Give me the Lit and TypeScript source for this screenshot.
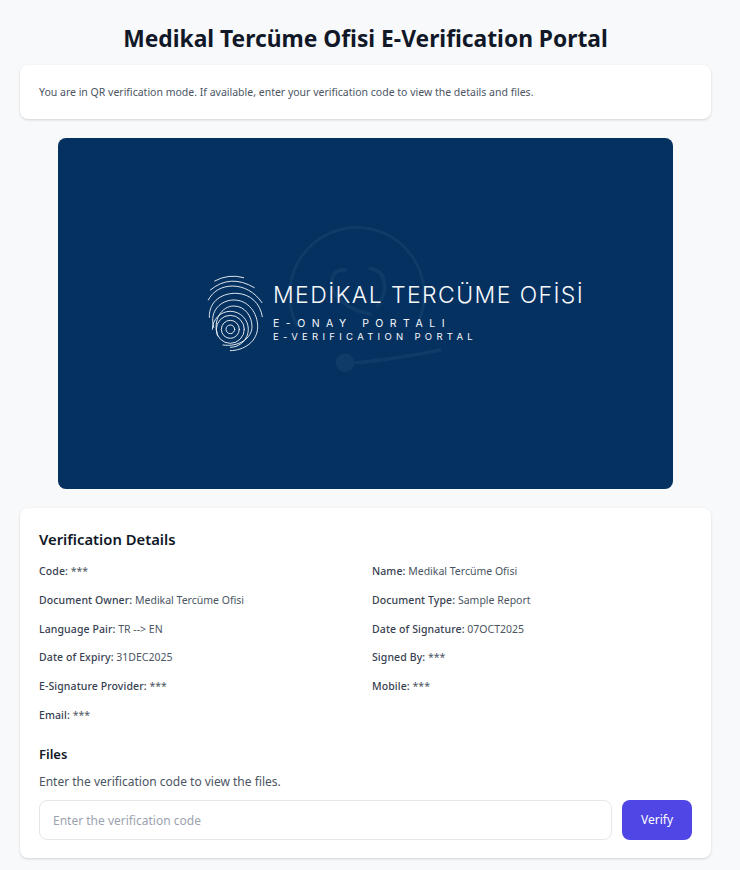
import { css, html, LitElement } from "lit";
import { customElement } from "lit/decorators.js";

const DETAILS: [string, string][] = [
  ["Code:", "***"],
  ["Name:", "Medikal Tercüme Ofisi"],
  ["Document Owner:", "Medikal Tercüme Ofisi"],
  ["Document Type:", "Sample Report"],
  ["Language Pair:", "TR --> EN"],
  ["Date of Signature:", "07OCT2025"],
  ["Date of Expiry:", "31DEC2025"],
  ["Signed By:", "***"],
  ["E-Signature Provider:", "***"],
  ["Mobile:", "***"],
  ["Email:", "***"],
];

@customElement("app-root")
export class AppRoot extends LitElement {
  static styles = css`
    :host {
      display: block;
      min-height: 870px;
      box-sizing: border-box;
      background: #f8f9fb;
      padding: 21px 29px 11px 20px;
      font-family: "Noto Sans", "Open Sans", sans-serif;
      color: #374151;
    }

    h1 {
      margin: 0 0 8px;
      font-size: 22.8px;
      line-height: 36px;
      font-weight: 700;
      text-align: center;
      color: #111827;
    }

    .card {
      background: #fff;
      border-radius: 8px;
      box-shadow: 0 1px 3px rgba(0, 0, 0, 0.12), 0 1px 2px rgba(0, 0, 0, 0.04);
    }

    .notice {
      height: 54px;
      box-sizing: border-box;
      padding: 0 19px;
      display: flex;
      align-items: center;
      font-size: 10.5px;
      color: #4b5563;
    }

    .banner {
      position: relative;
      width: 615px;
      height: 351px;
      margin: 19px auto;
      border-radius: 8px;
      background: #053161;
      overflow: hidden;
    }

    .watermark {
      position: absolute;
      left: 202px;
      top: 72px;
      width: 200px;
      height: 200px;
      fill: none;
      stroke: #0f3b69;
      stroke-linecap: round;
    }

    .finger {
      position: absolute;
      left: 148.67px;
      top: 137px;
      width: 56.67px;
      height: 77.33px;
      fill: none;
      stroke: #eef2f6;
      stroke-width: 2.8;
      stroke-linecap: round;
    }

    .logo-text {
      position: absolute;
      left: 215px;
      top: 142px;
      color: #f6f8fa;
      font-family: "Inter", sans-serif;
      white-space: nowrap;
    }

    .logo-name {
      font-size: 23px;
      line-height: 30px;
      font-weight: 300;
      letter-spacing: 1.4px;
    }

    .logo-sub {
      margin-top: 7px;
      font-size: 10.5px;
      line-height: 13px;
      font-weight: 400;
      letter-spacing: 6.5px;
    }

    .logo-sub.second {
      margin-top: 1px;
      font-size: 9.5px;
      line-height: 11px;
      letter-spacing: 4.3px;
    }

    .details {
      height: 350px;
      box-sizing: border-box;
      padding: 19px 19px;
    }

    h2 {
      margin: 0 0 12px;
      font-size: 14.8px;
      line-height: 24px;
      font-weight: 600;
      color: #111827;
    }

    .grid {
      display: grid;
      grid-template-columns: 333px 1fr;
      grid-auto-rows: 28.8px;
      font-size: 10.5px;
      line-height: 16px;
      color: #4b5563;
    }

    .grid b {
      font-weight: 500;
      color: #374151;
      letter-spacing: 0.1px;
    }

    h3 {
      margin: 8px 0 8px;
      font-size: 13px;
      line-height: 20px;
      font-weight: 600;
      color: #111827;
    }

    .hint {
      margin: 0 0 8px;
      font-size: 12px;
      line-height: 20px;
      color: #4b5563;
    }

    .verify {
      display: flex;
      gap: 10px;
    }

    input {
      flex: 1;
      min-width: 0;
      height: 40px;
      box-sizing: border-box;
      padding: 2px 13px 0;
      border: 1px solid #e5e7eb;
      border-radius: 8px;
      outline: none;
      background: #fff;
      font: 12px "Noto Sans", sans-serif;
    }

    input::placeholder {
      color: #9ca3af;
    }

    button {
      width: 70px;
      height: 40px;
      border: none;
      border-radius: 8px;
      background: #4f46e5;
      color: #fff;
      font: 12px "Noto Sans", sans-serif;
    }
  `;

  render() {
    return html`
      <h1>Medikal Tercüme Ofisi E-Verification Portal</h1>
      <div class="card notice">
        You are in QR verification mode. If available, enter your verification
        code to view the details and files.
      </div>
      <div class="banner">
        <svg class="watermark" viewBox="0 0 600 600">
          <path d="M110 345 A202 202 0 1 1 478 330" stroke-width="9"></path>
          <path
            d="M255 180 C215 175 205 220 225 250 C245 285 290 305 330 312"
            stroke-width="11"
          ></path>
          <path d="M330 175 C378 180 388 240 352 288" stroke-width="11"></path>
          <path d="M255 458 H300 C370 450 440 440 540 420" stroke-width="11"></path>
          <circle cx="255" cy="458" r="28" fill="#0f3b69" stroke="none"></circle>
        </svg>
        <svg class="finger" viewBox="80 195 170 232">
          <path d="M103 213 Q145 190 190 203"></path>
          <path d="M90 240 Q150 190 222 233"></path>
          <path d="M84 270 C110 215 200 210 245 278"></path>
          <path d="M87 322 C85 270 130 248 170 250 C210 252 240 280 246 320"></path>
          <path d="M100 352 C85 300 125 270 160 270 C205 270 232 310 232 350 C232 395 190 422 150 422"></path>
          <path d="M112 378 C95 330 125 288 160 288 C195 288 215 320 215 350 C215 385 175 412 128 405"></path>
          <path d="M96 358 A54 54 0 1 1 150 412"></path>
          <circle cx="150" cy="358" r="42"></circle>
          <circle cx="150" cy="358" r="27"></circle>
          <circle cx="150" cy="358" r="13"></circle>
        </svg>
        <div class="logo-text">
          <div class="logo-name">MEDİKAL TERCÜME OFİSİ</div>
          <div class="logo-sub">E-ONAY PORTALI</div>
          <div class="logo-sub second">E-VERIFICATION PORTAL</div>
        </div>
      </div>
      <div class="card details">
        <h2>Verification Details</h2>
        <div class="grid">
          ${DETAILS.map(([k, v]) => html`<div><b>${k}</b> ${v}</div>`)}
        </div>
        <h3>Files</h3>
        <p class="hint">Enter the verification code to view the files.</p>
        <div class="verify">
          <input placeholder="Enter the verification code" />
          <button>Verify</button>
        </div>
      </div>
    `;
  }
}
